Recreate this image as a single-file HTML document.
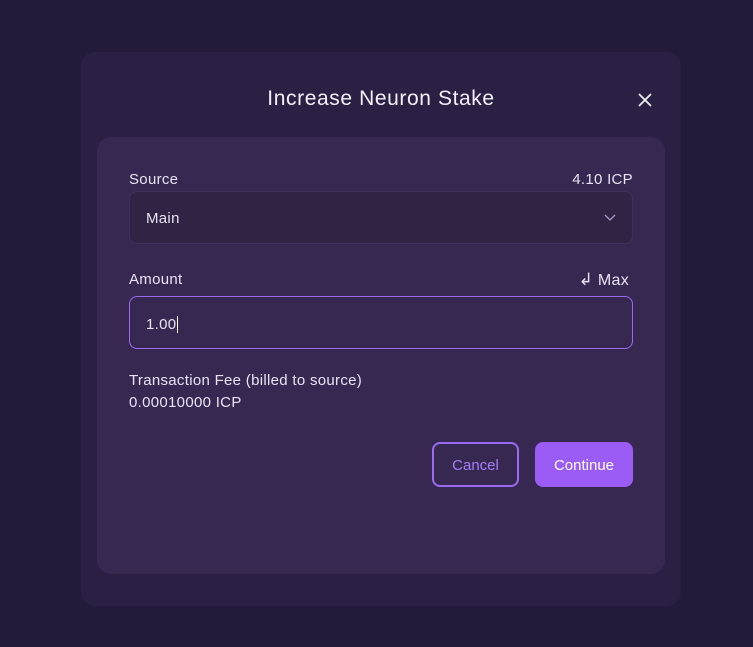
<!DOCTYPE html>
<html><head><style>
*{margin:0;padding:0;box-sizing:border-box}
body{width:753px;height:647px;background:#241a3a;font-family:"Liberation Sans",sans-serif;color:#f1edf8;position:relative;overflow:hidden}
.a{position:absolute}
.modal{left:81px;top:52px;width:600px;height:554px;background:#2c1f44;border-radius:14px}
.card{left:97px;top:137px;width:568px;height:437px;background:#372852;border-radius:14px}
.t{font-size:15px;color:#e8e3f2;letter-spacing:0.3px}
.box{left:129px;width:504px;height:53px;border-radius:8px}
</style></head><body>
<div class="a modal"></div>
<div class="a card"></div>
<div class="a" style="left:81px;width:600px;top:87px;text-align:center;font-size:21px;letter-spacing:0.6px;color:#f4f0fa">Increase Neuron Stake</div>
<svg class="a" style="left:638px;top:93px" width="14" height="14" viewBox="0 0 14 14"><path d="M1 1L13 13M13 1L1 13" stroke="#eee" stroke-width="1.8"/></svg>
<div class="a t" style="left:129px;top:171px">Source</div>
<div class="a t" style="right:120px;top:171px">4.10 ICP</div>
<div class="a box" style="top:191px;background:#302343;border:1px solid #3f305a"></div>
<div class="a t" style="left:146px;top:210px">Main</div>
<svg class="a" style="left:604px;top:214px" width="12" height="8" viewBox="0 0 12 8"><path d="M1 1L6 6L11 1" stroke="#a996d0" fill="none" stroke-width="1.3"/></svg>
<div class="a t" style="left:129px;top:271px">Amount</div>
<div class="a t" style="right:124px;top:270px;font-size:16px"><span style="font-size:17px">↲</span> Max</div>
<div class="a box" style="top:296px;background:#372852;border:1.5px solid #9a6bf0"></div>
<div class="a t" style="left:146px;top:316px">1.00<span style="border-left:1px solid #fff;margin-left:1px"></span></div>
<div class="a t" style="left:129px;top:372px">Transaction Fee (billed to source)</div>
<div class="a t" style="left:129px;top:394px">0.00010000 ICP</div>
<div class="a" style="left:432px;top:442px;width:87px;height:45px;border:2px solid #9a6bf0;border-radius:8px;color:#a57ef5;font-size:15px;text-align:center;line-height:43px">Cancel</div>
<div class="a" style="left:535px;top:442px;width:98px;height:45px;background:#9b5cf6;border-radius:8px;color:#fff;font-size:15px;text-align:center;line-height:47px">Continue</div>
</body></html>
